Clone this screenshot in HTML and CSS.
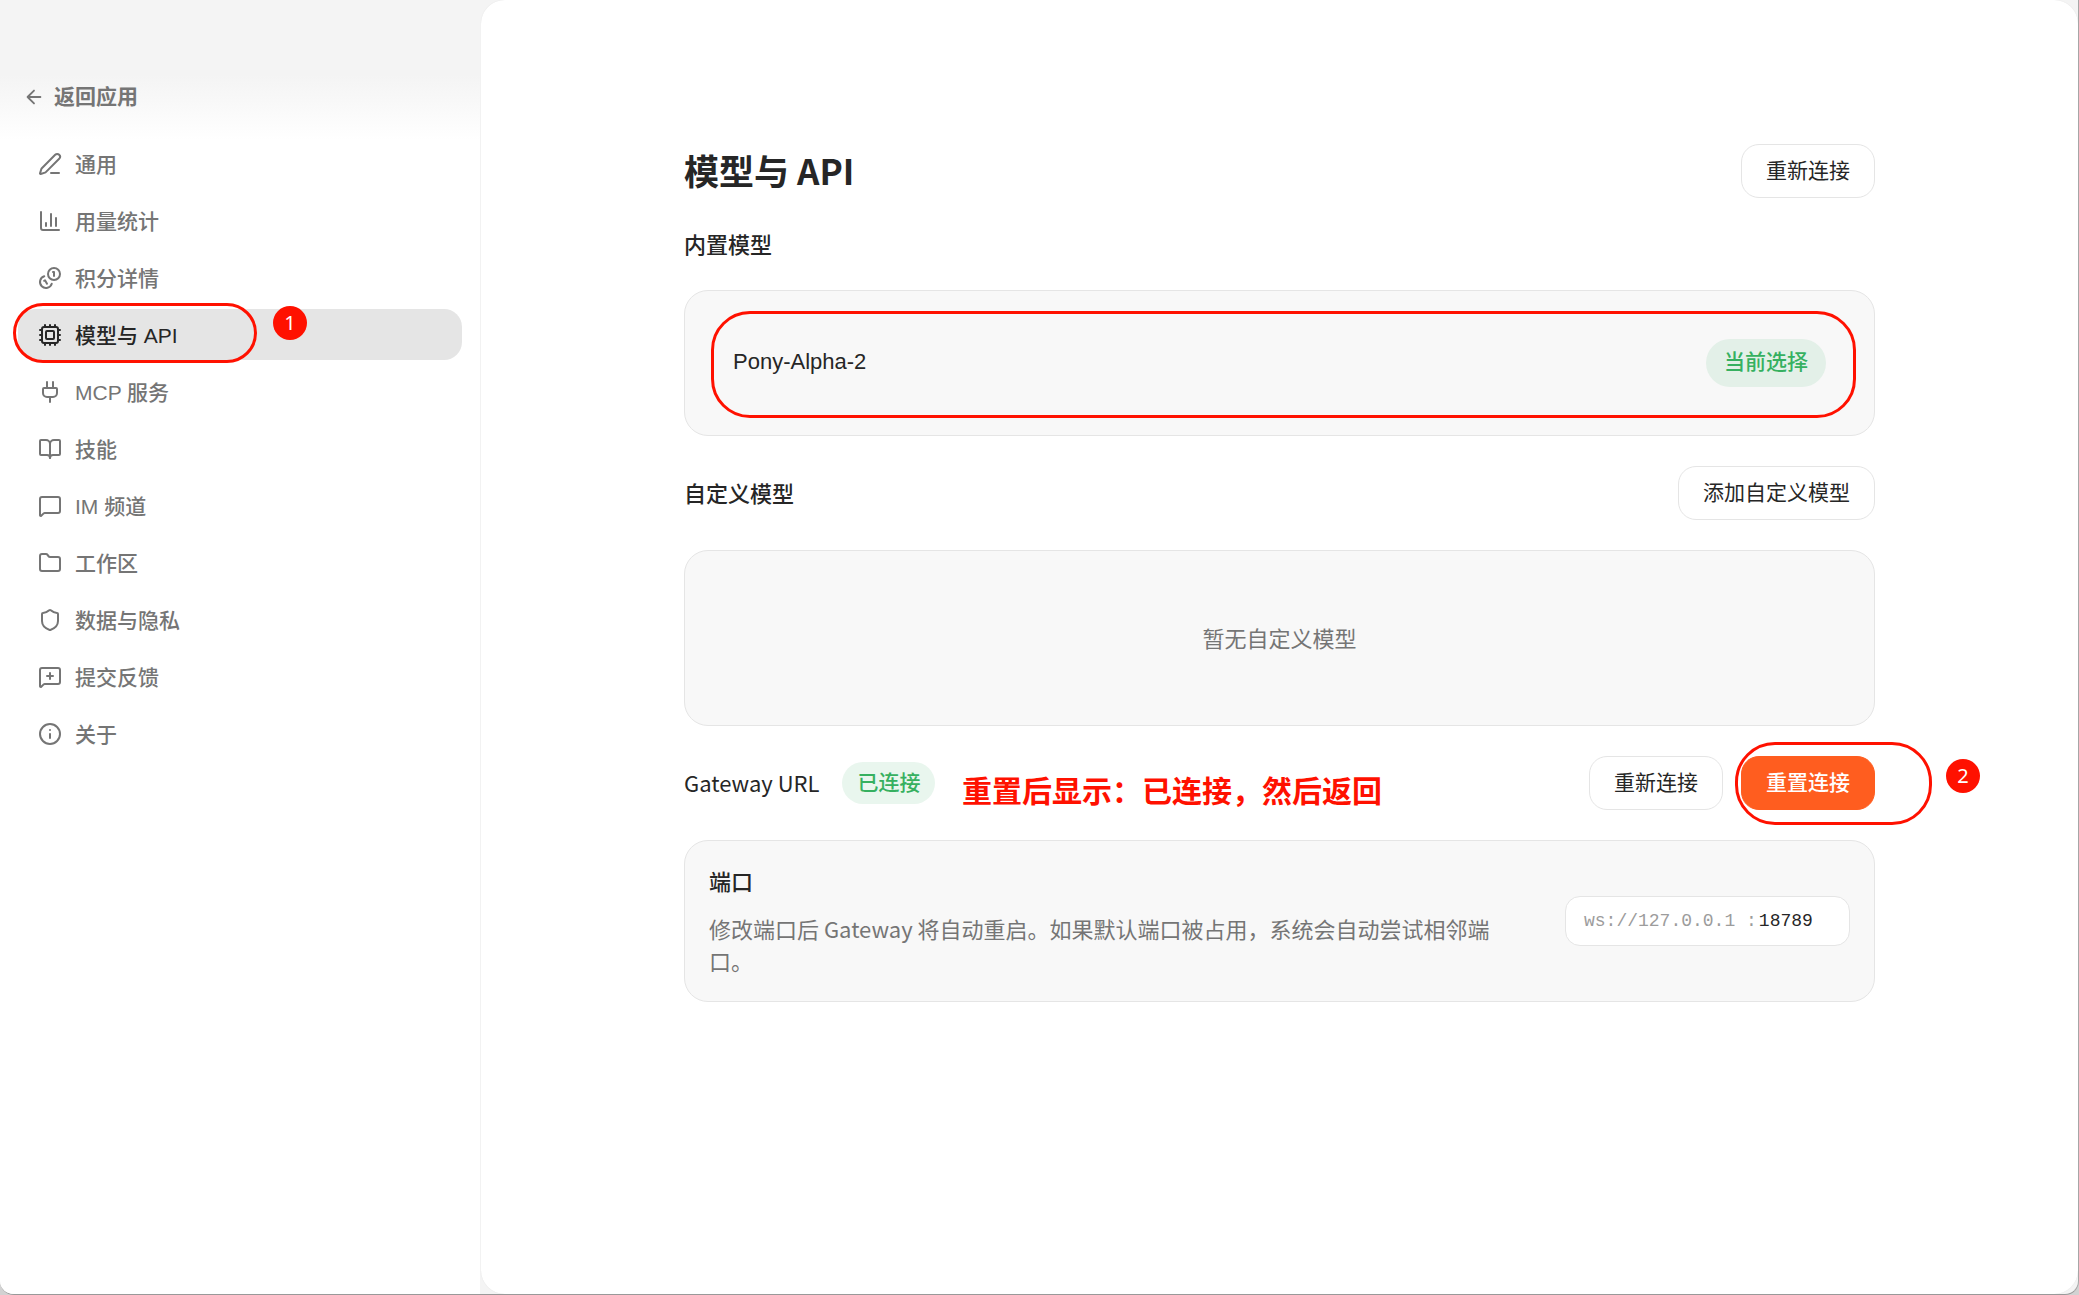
FILE: index.html
```html
<!DOCTYPE html>
<html lang="zh-CN">
	<head>
		<meta charset="UTF-8">
		<title>模型与 API</title>
		<link rel="stylesheet" href="styles.css">
	</head>
	<body>
		<div class="window">
			<aside class="sidebar">
				<a class="back" href="#">
					<svg class="icon" viewBox="0 0 24 24"><path d="M19 12H5M12 5l-7 7 7 7"/></svg>
					返回应用
				</a>
				<nav class="nav">
					<a class="nav-item" href="#">
						<svg class="icon" viewBox="0 0 24 24"><path d="M13 21h8"/><path d="M21.174 6.812a1 1 0 0 0-3.986-3.987L3.842 16.174a2 2 0 0 0-.5.83l-1.321 4.352a.5.5 0 0 0 .623.622l4.353-1.32a2 2 0 0 0 .83-.497z"/></svg>
						通用
					</a>
					<a class="nav-item" href="#">
						<svg class="icon" viewBox="0 0 24 24"><path d="M3 3v16a2 2 0 0 0 2 2h16"/><path d="M18 17V9M13 17V5M8 17v-3"/></svg>
						用量统计
					</a>
					<a class="nav-item" href="#">
						<svg class="icon" viewBox="0 0 24 24"><path d="M13.744 17.736a6 6 0 1 1-7.48-7.48"/><path d="M15 6h1v4"/><path d="m6.134 14.768.866-.5 2 3.464"/><circle cx="16" cy="8" r="6"/></svg>
						积分详情
					</a>
					<a class="nav-item active" href="#">
						<svg class="icon" viewBox="0 0 24 24"><path d="M12 20v2M12 2v2M17 20v2M17 2v2M2 12h2M2 17h2M2 7h2M20 12h2M20 17h2M20 7h2M7 20v2M7 2v2"/><rect x="4" y="4" width="16" height="16" rx="2"/><rect x="8" y="8" width="8" height="8" rx="1"/></svg>
						模型与 API
						<span class="ring ring-nav"></span>
						<span class="step step-nav">1</span>
					</a>
					<a class="nav-item" href="#">
						<svg class="icon" viewBox="0 0 24 24"><path d="M12 22v-5M15 8V2M9 8V2"/><path d="M18 8a1 1 0 0 1 1 1v4a4 4 0 0 1-4 4H9a4 4 0 0 1-4-4V9a1 1 0 0 1 1-1z"/></svg>
						MCP 服务
					</a>
					<a class="nav-item" href="#">
						<svg class="icon" viewBox="0 0 24 24"><path d="M12 7v14"/><path d="M3 18a1 1 0 0 1-1-1V4a1 1 0 0 1 1-1h5a4 4 0 0 1 4 4 4 4 0 0 1 4-4h5a1 1 0 0 1 1 1v13a1 1 0 0 1-1 1h-6a3 3 0 0 0-3 3 3 3 0 0 0-3-3z"/></svg>
						技能
					</a>
					<a class="nav-item" href="#">
						<svg class="icon" viewBox="0 0 24 24"><path d="M22 17a2 2 0 0 1-2 2H6.828a2 2 0 0 0-1.414.586l-2.202 2.202A.71.71 0 0 1 2 21.286V5a2 2 0 0 1 2-2h16a2 2 0 0 1 2 2z"/></svg>
						IM 频道
					</a>
					<a class="nav-item" href="#">
						<svg class="icon" viewBox="0 0 24 24"><path d="M20 20a2 2 0 0 0 2-2V8a2 2 0 0 0-2-2h-7.9a2 2 0 0 1-1.69-.9L9.6 3.9A2 2 0 0 0 7.93 3H4a2 2 0 0 0-2 2v13a2 2 0 0 0 2 2Z"/></svg>
						工作区
					</a>
					<a class="nav-item" href="#">
						<svg class="icon" viewBox="0 0 24 24"><path d="M20 13c0 5-3.5 7.5-7.66 8.95a1 1 0 0 1-.67-.01C7.5 20.5 4 18 4 13V6a1 1 0 0 1 1-1c2 0 4.5-1.2 6.24-2.72a1.17 1.17 0 0 1 1.52 0C14.51 3.81 17 5 19 5a1 1 0 0 1 1 1z"/></svg>
						数据与隐私
					</a>
					<a class="nav-item" href="#">
						<svg class="icon" viewBox="0 0 24 24"><path d="M22 17a2 2 0 0 1-2 2H6.828a2 2 0 0 0-1.414.586l-2.202 2.202A.71.71 0 0 1 2 21.286V5a2 2 0 0 1 2-2h16a2 2 0 0 1 2 2z"/><path d="M12 8v6M9 11h6"/></svg>
						提交反馈
					</a>
					<a class="nav-item" href="#">
						<svg class="icon" viewBox="0 0 24 24"><circle cx="12" cy="12" r="10"/><path d="M12 16v-4M12 8h.01"/></svg>
						关于
					</a>
				</nav>
			</aside>

			<main class="main">
				<div class="content">
					<div class="row">
						<h1 class="title">模型与 API</h1>
						<button class="btn" type="button">重新连接</button>
					</div>

					<h2 class="subtitle">内置模型</h2>
					<div class="card model">
						<span class="model-name">Pony-Alpha-2</span>
						<span class="badge badge-current">当前选择</span>
						<span class="ring ring-model"></span>
					</div>

					<div class="row">
						<h2 class="subtitle">自定义模型</h2>
						<button class="btn" type="button">添加自定义模型</button>
					</div>
					<div class="card empty">暂无自定义模型</div>

					<div class="row">
						<h2 class="subtitle subtitle-url">Gateway URL</h2>
						<span class="badge">已连接</span>
						<strong class="note">重置后显示：已连接，然后返回</strong>
						<div class="actions">
							<button class="btn" type="button">重新连接</button>
							<button class="btn btn-primary" type="button">重置连接</button>
							<span class="ring ring-reset"></span>
							<span class="step step-reset">2</span>
						</div>
					</div>
					<div class="card port">
						<div class="port-text">
							<h3 class="subtitle">端口</h3>
							<p class="desc">修改端口后 Gateway 将自动重启。如果默认端口被占用，系统会自动尝试相邻端口。</p>
						</div>
						<div class="port-box">
							<label for="port">ws://127.0.0.1 :</label>
							<input id="port" type="text" value="18789">
						</div>
					</div>
				</div>
			</main>
		</div>
	</body>
</html>
```
FILE: styles.css
```css
*{
	margin: 0;
	padding: 0;
	box-sizing: border-box;
}
body{
	background: #d2d2d2;
	color: #262626;
	font-family: "Noto Sans CJK SC", sans-serif;
	font-size: 22px;
	line-height: 32px;
}
a{
	color: inherit;
	text-decoration: none;
}
button, input{
	font: inherit;
	color: inherit;
}
.window{
	display: flex;
	gap: 1px;
	min-height: 100vh;
	background: #f4f4f4;
	border-right: 1px solid #a6a6a6;
	border-bottom: 1px solid #999;
	border-radius: 0 0 14px 14px;
	overflow: hidden;
}

/* sidebar */
.sidebar{
	flex: 0 0 480px;
	padding: 81px 18px 24px;
	background: linear-gradient(#f4f4f4 75px, #f8f8f8 100px, #fdfdfd 128px, #fff 140px);
	color: #757575;
	font-family: "Liberation Sans", "Noto Sans CJK SC", sans-serif;
	font-size: 21px;
}
.icon{
	width: 24px;
	height: 24px;
	flex: none;
	fill: none;
	stroke: currentColor;
	stroke-width: 2;
	stroke-linecap: round;
	stroke-linejoin: round;
}
.back{
	display: flex;
	align-items: center;
	gap: 9px;
	padding-left: 5px;
	font-weight: bold;
}
.back .icon{
	width: 22px;
	height: 22px;
}
.nav{
	display: flex;
	flex-direction: column;
	gap: 6px;
	margin-top: 25px;
}
.nav-item{
	position: relative;
	display: flex;
	align-items: center;
	gap: 13px;
	height: 51px;
	padding: 2px 20px 0;
	border-radius: 18px;
	font-weight: 500;
}
.nav-item .icon{
	margin-bottom: 2px;
}
.nav-item.active{
	background: #e5e5e5;
	color: #262626;
}

/* main */
.main{
	flex: 1;
	padding: 144px 24px 48px;
	background: #fff;
	border-radius: 24px;
	box-shadow: 0 0 1px #ddd;
}
.content{
	display: flex;
	flex-direction: column;
	gap: 30px;
	max-width: 1191px;
	margin: 0 auto;
}
.row{
	position: relative;
	display: flex;
	align-items: center;
	gap: 20px;
}
.row > .btn, .actions{
	margin-left: auto;
}
.title{
	padding-bottom: 3px;
	font-size: 35px;
	line-height: 51px;
	font-weight: bold;
}
.subtitle{
	padding-bottom: 2px;
	font-size: 22px;
	line-height: 30px;
	font-weight: 500;
}
.subtitle-url{
	padding-right: 3px;
	font-weight: 400;
}
.btn{
	height: 54px;
	padding: 0 24px;
	border: 1px solid #e5e5e5;
	border-radius: 18px;
	background: #fff;
	font-family: "Liberation Sans", "Noto Sans CJK SC", sans-serif;
	font-size: 21px;
}
.btn-primary{
	border-color: #ff5d1f;
	background: #ff5d1f;
	color: #fff;
	font-weight: 500;
}
.actions{
	position: relative;
	display: flex;
	gap: 18px;
}
.badge{
	padding: 5px 15px;
	border-radius: 24px;
	background: #e9f6ee;
	color: #36b060;
	font-family: "Liberation Sans", "Noto Sans CJK SC", sans-serif;
	font-size: 21px;
	font-weight: 500;
}
.badge-current{
	padding: 7px 18px 9px;
	background: #e3f0e8;
}
.card{
	position: relative;
	display: flex;
	align-items: center;
	padding: 24px;
	border: 1px solid #e5e5e5;
	border-radius: 24px;
	background: #f8f8f8;
}
.model{
	justify-content: space-between;
	height: 146px;
	padding: 0 48px;
}
.model-name{
	padding-bottom: 2px;
	font-family: "Liberation Sans", sans-serif;
}
.empty{
	justify-content: center;
	height: 176px;
	padding-bottom: 26px;
	color: #757575;
}
.port{
	gap: 48px;
}
.port-text{
	flex: 1;
}
.desc{
	margin-top: 15px;
	padding-bottom: 1px;
	color: #757575;
}
.port-box{
	display: flex;
	align-items: center;
	gap: 2px;
	width: 285px;
	height: 50px;
	padding: 0 18px;
	border: 1px solid #e5e5e5;
	border-radius: 15px;
	background: #fff;
	font-family: "Liberation Mono", monospace;
	font-size: 18px;
}
.port-box label{
	flex: none;
	color: #9c9c9c;
}
.port-box input{
	flex: 1;
	min-width: 0;
	border: 0;
	outline: 0;
	background: none;
}

/* red marks over the page */
.ring{
	position: absolute;
	border: 3px solid #ff1100;
	pointer-events: none;
}
.ring-nav{
	left: -5px;
	top: -6px;
	width: 244px;
	height: 60px;
	border-radius: 31px;
}
.ring-model{
	left: 26px;
	right: 18px;
	top: 20px;
	bottom: 17px;
	border-radius: 39px;
}
.ring-reset{
	right: -57px;
	top: -14px;
	width: 197px;
	height: 83px;
	border-radius: 40px;
}
.step{
	position: absolute;
	width: 34px;
	height: 34px;
	border-radius: 50%;
	background: #ff1100;
	color: #fff;
	font-family: "Noto Sans", sans-serif;
	font-size: 20px;
	font-weight: normal;
	line-height: 34px;
	text-align: center;
}
.step-nav{
	left: 255px;
	top: -3px;
}
.step-reset{
	right: -105px;
	top: 3px;
}
.note{
	position: absolute;
	left: 278px;
	top: 17px;
	color: #ff1100;
	font-size: 30px;
}
```
